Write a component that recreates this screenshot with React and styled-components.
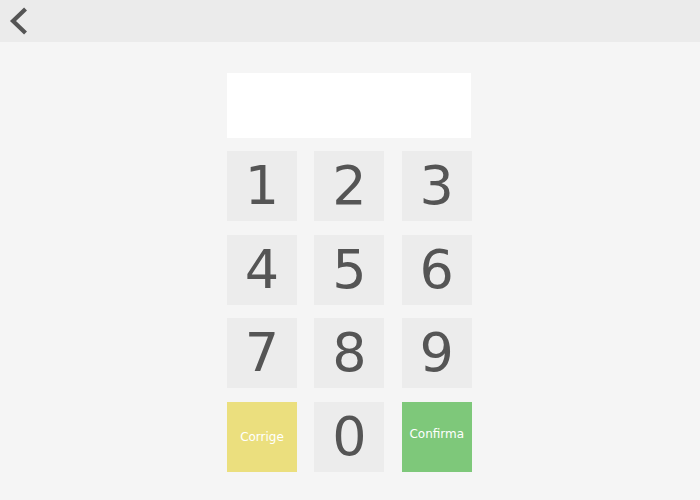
import styled, { createGlobalStyle } from 'styled-components';

const GlobalStyle = createGlobalStyle`
  html, body {
    margin: 0;
    padding: 0;
    background: #f5f5f5;
    font-family: "DejaVu Sans", Verdana, sans-serif;
  }
`;

const Page = styled.div`
  width: 700px;
  height: 500px;
  display: flex;
  flex-direction: column;
  background: #f5f5f5;
`;

const TopBar = styled.header`
  height: 42px;
  background: #ebebeb;
  display: flex;
  align-items: center;
  padding-left: 8px;
  box-sizing: border-box;
`;

const BackButton = styled.button`
  width: 22px;
  height: 28px;
  padding: 0;
  border: none;
  background: transparent;
  display: flex;
  align-items: center;
  justify-content: center;
  cursor: pointer;
`;

const Content = styled.main`
  display: flex;
  justify-content: center;
  padding-top: 31px;
`;

const Pad = styled.div`
  width: 246px;
  display: flex;
  flex-direction: column;
  gap: 13px;
`;

const Display = styled.div`
  height: 65px;
  width: 244px;
  background: #ffffff;
`;

const Keys = styled.div`
  display: grid;
  grid-template-columns: repeat(3, 70px);
  grid-auto-rows: 70px;
  column-gap: 17.4px;
  row-gap: 13.5px;
`;

const keyColors = {
  digit: '#ececec',
  fix: '#ebdf7e',
  ok: '#7ec87a',
};

const Key = styled.button`
  width: 70px;
  height: 70px;
  border: none;
  padding: 0 0 ${(p) => (p.$kind === 'ok' ? '5px' : '0')};
  background: ${(p) => keyColors[p.$kind]};
  color: ${(p) => (p.$kind === 'digit' ? '#555555' : '#ffffff')};
  font-family: "DejaVu Sans", Verdana, sans-serif;
  font-size: ${(p) => (p.$kind === 'digit' ? '54px' : '12px')};
  line-height: 1;
  display: flex;
  align-items: center;
  justify-content: center;
  cursor: pointer;
`;

const digits = ['1', '2', '3', '4', '5', '6', '7', '8', '9'];

export default function App() {
  return (
    <Page>
      <GlobalStyle />
      <TopBar>
        <BackButton aria-label="back">
          <svg width="22" height="28" viewBox="0 0 22 28">
            <path
              d="M16 3.5 L5 14 L16 24.5"
              fill="none"
              stroke="#555555"
              strokeWidth="4.2"
              strokeLinecap="square"
            />
          </svg>
        </BackButton>
      </TopBar>
      <Content>
        <Pad>
          <Display />
          <Keys>
            {digits.map((d) => (
              <Key key={d} $kind="digit">
                {d}
              </Key>
            ))}
            <Key $kind="fix">Corrige</Key>
            <Key $kind="digit">0</Key>
            <Key $kind="ok">Confirma</Key>
          </Keys>
        </Pad>
      </Content>
    </Page>
  );
}
